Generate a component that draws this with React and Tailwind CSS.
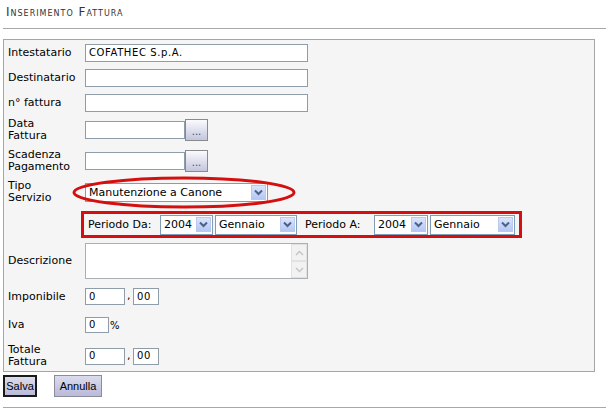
import React from "react";

const font = "font-['DejaVu_Sans',Verdana,sans-serif]";

function Chevron() {
  return (
    <svg width="9" height="7" viewBox="0 0 9 7">
      <path d="M1 1.5 L4.5 5 L8 1.5" fill="none" stroke="#4d6185" strokeWidth="2" />
    </svg>
  );
}

function Select({ text, className }) {
  return (
    <div className={`box-border flex items-center border border-[#7f9db9] bg-white ${className}`}>
      <span className="flex-1 truncate pl-[3px] text-[11px] leading-[13px] text-black">{text}</span>
      <span className="mr-[1px] flex h-[15px] w-[15px] items-center justify-center border border-[#b9c9ef] bg-gradient-to-b from-[#dbe5fd] to-[#b4c6f3]">
        <Chevron />
      </span>
    </div>
  );
}

function Input({ value = "", className }) {
  return (
    <div className={`box-border flex items-center border border-[#8f9ca9] bg-white px-[3px] text-[10px] leading-[12px] tracking-[0.6px] text-black ${className}`}>
      {value}
    </div>
  );
}

function DotsButton() {
  return (
    <div className="box-border flex h-[22px] w-[23px] items-center justify-center border border-[#8a8a8a] bg-gradient-to-b from-[#fbfbfd] to-[#c3c6dc] pt-[3px] text-[10px] leading-[10px] text-[#3b4a78]">
      ...
    </div>
  );
}

function Row({ label, className, children }) {
  return (
    <div className={`flex items-center ${className}`}>
      <div className="w-[81px] pl-[4px] text-[11px] leading-[12px] text-black">{label}</div>
      {children}
    </div>
  );
}

function ScrollArrow({ up }) {
  return (
    <div className="flex h-[17px] w-[16px] items-center justify-center border border-[#e2e2e2] bg-[#f2f2f2]">
      <svg width="9" height="6" viewBox="0 0 9 6">
        <path d={up ? "M1 5 L4.5 1.5 L8 5" : "M1 1 L4.5 4.5 L8 1"} fill="none" stroke="#c6c6c6" strokeWidth="1.5" />
      </svg>
    </div>
  );
}

export default function App() {
  return (
    <div className={`min-h-[411px] w-[606px] bg-white ${font}`}>
      <div className="pl-[6px] pt-[5px] text-[12px] leading-[14px] tracking-[1px] text-[#333] [font-variant:small-caps]">
        Inserimento Fattura
      </div>
      <div className="ml-[3px] mt-[9px] h-px bg-[#a8a8a8]" />

      <div className="ml-[3px] mt-[10px] w-[592px] border border-[#a5a5a5] bg-[#f5f5f5] pb-[2px]">
        <Row label="Intestatario" className="mt-[2px] h-[22px]">
          <Input value="COFATHEC S.p.A." className="h-[18px] w-[223px]" />
        </Row>
        <Row label="Destinatario" className="mt-[3px] h-[22px]">
          <Input className="h-[18px] w-[223px]" />
        </Row>
        <Row label="n° fattura" className="mt-[3px] h-[22px]">
          <Input className="h-[18px] w-[223px]" />
        </Row>
        <Row label={<>Data<br />Fattura</>} className="mt-[3px] h-[26px]">
          <Input className="h-[18px] w-[100px]" />
          <DotsButton />
        </Row>
        <Row label={<>Scadenza<br />Pagamento</>} className="mt-[5px] h-[26px]">
          <Input className="h-[18px] w-[100px]" />
          <DotsButton />
        </Row>
        <Row label={<>Tipo<br />Servizio</>} className="mt-[5px] h-[26px]">
          <div className="relative">
            <Select text="Manutenzione a Canone" className="h-[19px] w-[183px]" />
            <svg className="absolute left-[-13px] top-[-7px]" width="224" height="33" viewBox="0 0 224 33">
              <ellipse cx="112" cy="16.5" rx="110" ry="14.5" fill="none" stroke="#d40f0f" strokeWidth="3" />
            </svg>
          </div>
        </Row>

        <div className="ml-[77px] mt-[6px] flex h-[27px] w-[441px] items-center border-[3px] border-[#d40f0f] pl-[4px] text-[11px] leading-[13px] text-black">
          <span className="w-[72px]">Periodo Da:</span>
          <Select text="2004" className="h-[20px] w-[53px]" />
          <Select text="Gennaio" className="ml-[2px] h-[20px] w-[82px]" />
          <span className="ml-[8px] w-[69px]">Periodo A:</span>
          <Select text="2004" className="h-[20px] w-[54px]" />
          <Select text="Gennaio" className="ml-[2px] h-[20px] w-[85px]" />
        </div>

        <Row label="Descrizione" className="mt-[5px] h-[36px]">
          <div className="box-border flex h-[36px] w-[223px] justify-end border border-[#a7afb7] bg-white">
            <div className="flex flex-col justify-between">
              <ScrollArrow up />
              <ScrollArrow />
            </div>
          </div>
        </Row>
        <Row label="Imponibile" className="mt-[9px] h-[17px]">
          <Input value="0" className="h-[17px] w-[40px]" />
          <span className="ml-[2px] w-[6px] text-[11px]">,</span>
          <Input value="00" className="h-[17px] w-[26px]" />
        </Row>
        <Row label="Iva" className="mt-[12px] h-[16px]">
          <Input value="0" className="h-[16px] w-[24px]" />
          <span className="ml-[1px] text-[10px]">%</span>
        </Row>
        <Row label={<>Totale<br />Fattura</>} className="mt-[10px] h-[26px]">
          <Input value="0" className="h-[17px] w-[40px]" />
          <span className="ml-[2px] w-[6px] text-[11px]">,</span>
          <Input value="00" className="h-[17px] w-[26px]" />
        </Row>
      </div>

      <div className="ml-[3px] mt-[3px] flex gap-[17px] font-['Liberation_Sans',Arial,sans-serif] text-[11px] leading-[13px] text-black">
        <button type="button" className="box-border h-[22px] w-[34px] border-2 border-[#1a1a1a] bg-gradient-to-b from-[#dcdcee] to-[#b9b9d9]">
          Salva
        </button>
        <button type="button" className="box-border h-[22px] w-[48px] border border-[#8c8c9c] bg-gradient-to-b from-[#dcdcee] to-[#b9b9d9]">
          Annulla
        </button>
      </div>
      <div className="ml-[3px] mt-[10px] h-px bg-[#a8a8a8]" />
    </div>
  );
}
